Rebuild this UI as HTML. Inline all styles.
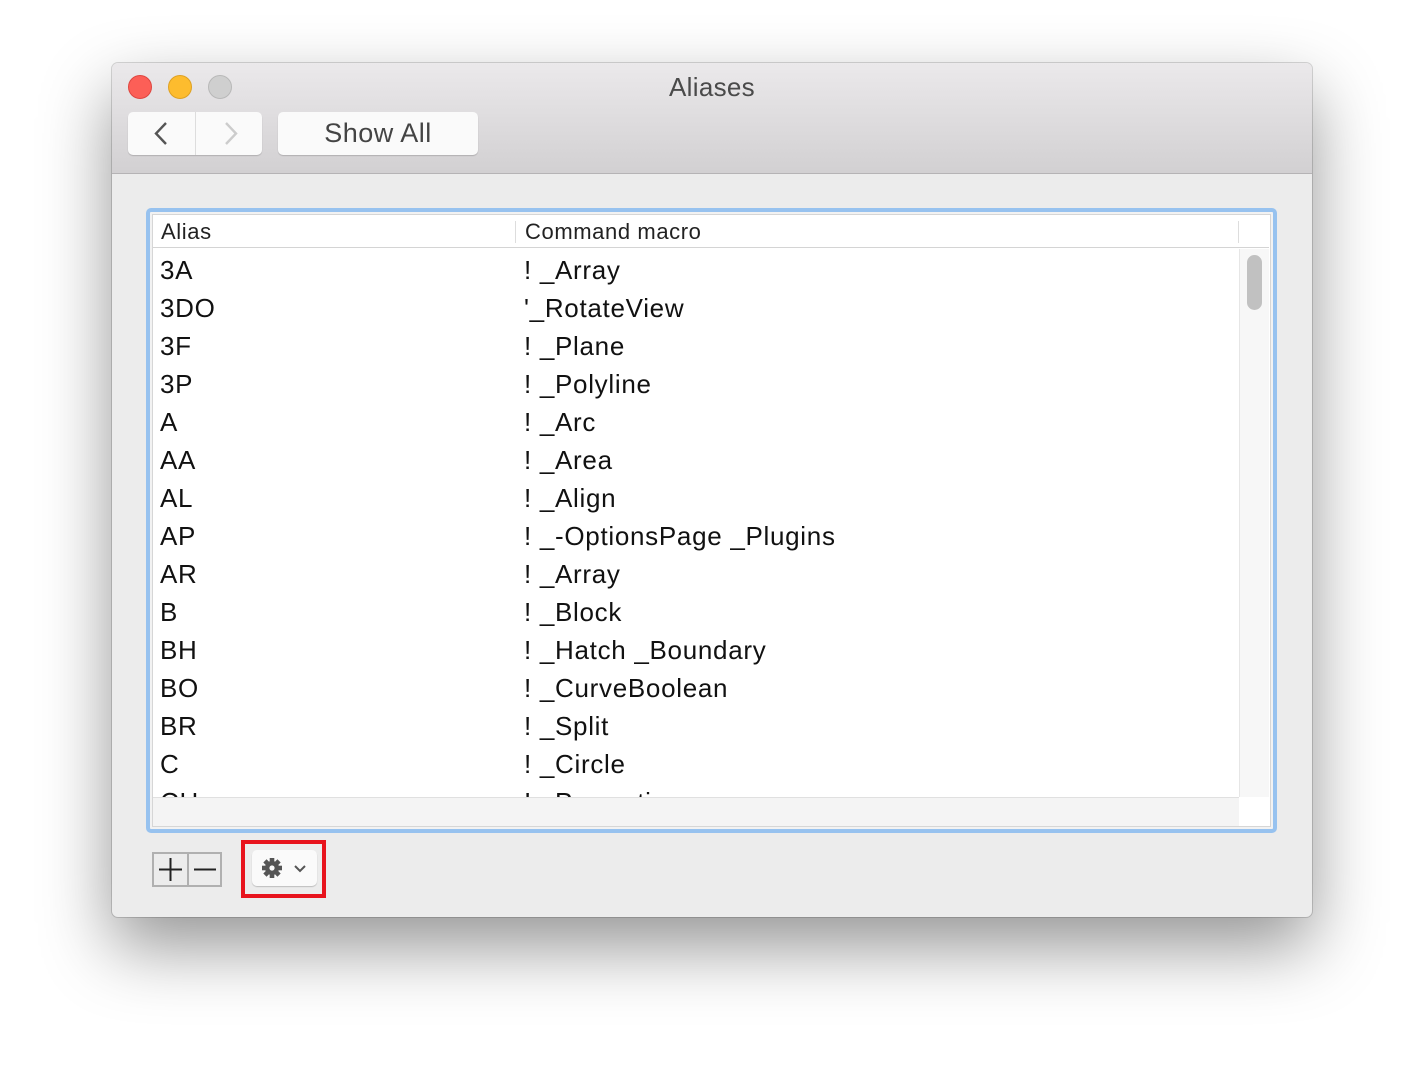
<!DOCTYPE html>
<html><head><meta charset="utf-8"><style>
*{margin:0;padding:0;box-sizing:border-box}
body{width:1424px;height:1078px;background:#fff;font-family:"Liberation Sans",sans-serif;position:relative;overflow:hidden}
.win{position:absolute;left:112px;top:63px;width:1200px;height:854px;background:#ececec;border-radius:6px;box-shadow:0 30px 70px rgba(0,0,0,.42),0 0 0 1px rgba(0,0,0,.15);overflow:hidden}
.tb{position:absolute;left:0;top:0;width:1200px;height:111px;background:linear-gradient(#ebe9eb,#d2d0d2);border-bottom:1px solid #b5b3b5}
.dot{position:absolute;top:12px;width:24px;height:24px;border-radius:50%}
.title{position:absolute;top:9px;width:100%;text-align:center;font-size:26px;letter-spacing:0.3px;color:#4a4a4a}
.btn{position:absolute;top:49px;height:43px;background:#fafafa;border-radius:5px;box-shadow:0 1px 1px rgba(0,0,0,.18)}
.tbl{position:absolute;left:34px;top:145px;width:1131px;height:625px;border:4px solid #97c2ef;border-radius:5px;background:#f2f2f2}
.inner{position:absolute;left:2px;top:2px;right:2px;bottom:2px;background:#fff;border:1px solid #d6d6d6;overflow:hidden}
.hdr{position:absolute;left:0;top:0;width:1116px;height:33px;border-bottom:1px solid #d4d4d4;font-size:22px;letter-spacing:0.6px;color:#222}
.row{position:absolute;left:0;height:38px;font-size:26px;letter-spacing:0.7px;color:#111;width:1080px}
.row span{position:absolute;top:4px}
</style></head><body>
<div class="win">
 <div class="tb">
  <div class="dot" style="left:16px;background:#fc5f57;border:1px solid #de4640"></div>
  <div class="dot" style="left:56px;background:#fdbc2e;border:1px solid #dea123"></div>
  <div class="dot" style="left:96px;background:#cfcfcf;border:1px solid #b8b8b8"></div>
  <div class="title">Aliases</div>
  <div class="btn" style="left:16px;width:134px">
   <div style="position:absolute;left:67px;top:0;width:1px;height:43px;background:#ddd"></div>
   <svg width="134" height="43" style="position:absolute;left:0;top:0"><path d="M38 11 L28 21.5 L38 32" stroke="#555" stroke-width="2.4" fill="none"/><path d="M98 11 L108 21.5 L98 32" stroke="#ccc" stroke-width="2.4" fill="none"/></svg>
  </div>
  <div class="btn" style="left:166px;width:200px;text-align:center;line-height:43px;font-size:27px;letter-spacing:0.5px;color:#444">Show All</div>
 </div>
 <div class="tbl"><div class="inner">
  <div class="hdr">
   <span style="position:absolute;left:8px;top:4px">Alias</span>
   <div style="position:absolute;left:362px;top:6px;width:1px;height:22px;background:#ddd"></div>
   <span style="position:absolute;left:372px;top:4px">Command macro</span>
   <div style="position:absolute;left:1085px;top:6px;width:1px;height:22px;background:#ddd"></div>
  </div>
  <div style="position:absolute;left:1086px;top:34px;width:30px;height:548px;background:#f7f7f7;border-left:1px solid #e6e6e6"></div>
  <div style="position:absolute;left:1094px;top:40px;width:15px;height:55px;border-radius:8px;background:#c1c1c1"></div>
  <div style="position:absolute;left:0;top:582px;width:1086px;height:40px;background:#f4f4f4;border-top:1px solid #e0e0e0;z-index:2"></div>
  <div style="position:absolute;left:0;top:36px">
   <div class="row" style="top:0"><span style="left:7px">3A</span><span style="left:371px">! _Array</span></div>
   <div class="row" style="top:38px"><span style="left:7px">3DO</span><span style="left:371px">'_RotateView</span></div>
   <div class="row" style="top:76px"><span style="left:7px">3F</span><span style="left:371px">! _Plane</span></div>
   <div class="row" style="top:114px"><span style="left:7px">3P</span><span style="left:371px">! _Polyline</span></div>
   <div class="row" style="top:152px"><span style="left:7px">A</span><span style="left:371px">! _Arc</span></div>
   <div class="row" style="top:190px"><span style="left:7px">AA</span><span style="left:371px">! _Area</span></div>
   <div class="row" style="top:228px"><span style="left:7px">AL</span><span style="left:371px">! _Align</span></div>
   <div class="row" style="top:266px"><span style="left:7px">AP</span><span style="left:371px">! _-OptionsPage _Plugins</span></div>
   <div class="row" style="top:304px"><span style="left:7px">AR</span><span style="left:371px">! _Array</span></div>
   <div class="row" style="top:342px"><span style="left:7px">B</span><span style="left:371px">! _Block</span></div>
   <div class="row" style="top:380px"><span style="left:7px">BH</span><span style="left:371px">! _Hatch _Boundary</span></div>
   <div class="row" style="top:418px"><span style="left:7px">BO</span><span style="left:371px">! _CurveBoolean</span></div>
   <div class="row" style="top:456px"><span style="left:7px">BR</span><span style="left:371px">! _Split</span></div>
   <div class="row" style="top:494px"><span style="left:7px">C</span><span style="left:371px">! _Circle</span></div>
   <div class="row" style="top:532px"><span style="left:7px">CH</span><span style="left:371px">! _Properties</span></div>
  </div>
 </div></div>
 <div style="position:absolute;left:40px;top:789px;width:70px;height:35px;border:2px solid #b0b0b0;background:#ececec">
  <div style="position:absolute;left:33px;top:0;width:2px;height:31px;background:#b0b0b0"></div>
  <svg width="66" height="31" style="position:absolute;left:0;top:0"><path d="M5 15.5H28M16.5 4V27M40 15.5H62" stroke="#222" stroke-width="2"/></svg>
 </div>
 <div style="position:absolute;left:129px;top:777px;width:85px;height:58px;border:4px solid #e8141d"></div>
 <div style="position:absolute;left:140px;top:787px;width:65px;height:36px;background:#fafafa;border-radius:5px;box-shadow:0 1px 1px rgba(0,0,0,.2)">
  <svg width="65" height="36" style="position:absolute;left:0;top:0">
   <g transform="translate(20,18)" fill="#555">
    <circle r="7"/>
    <rect x="-2.3" y="-10" width="4.6" height="20"/>
    <rect x="-2.3" y="-10" width="4.6" height="20" transform="rotate(45)"/>
    <rect x="-2.3" y="-10" width="4.6" height="20" transform="rotate(90)"/>
    <rect x="-2.3" y="-10" width="4.6" height="20" transform="rotate(135)"/>
    <circle r="2.6" fill="#fafafa"/>
   </g>
   <path d="M43 16 L48 21 L53 16" stroke="#555" stroke-width="2" fill="none"/>
  </svg>
 </div>
</div>
</body></html>
